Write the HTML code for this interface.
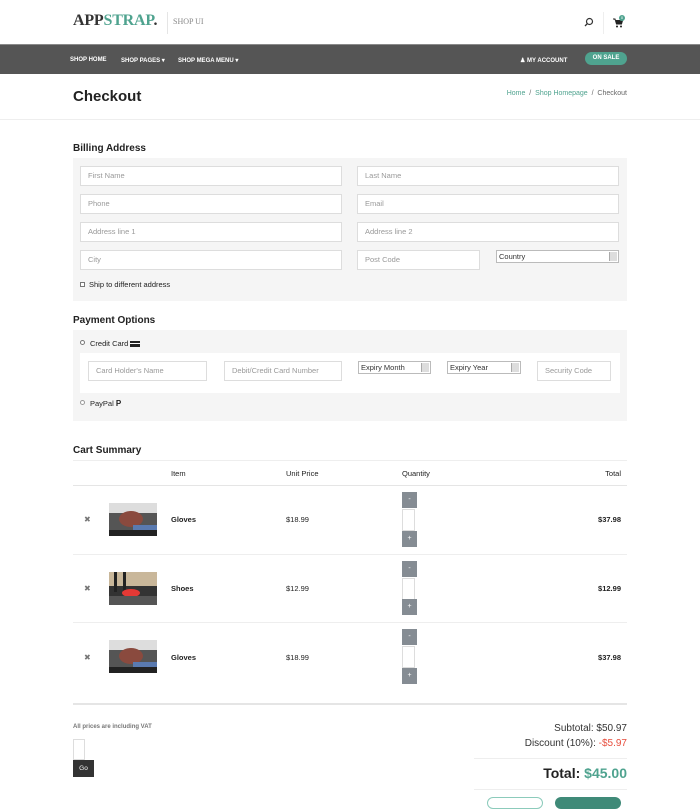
<!DOCTYPE html>
<html><head><meta charset="utf-8"><style>
*{margin:0;padding:0;box-sizing:border-box}
body{width:700px;height:800px;overflow:hidden;background:#fff;font-family:"Liberation Sans",sans-serif;color:#222;position:relative}
.a{position:absolute;white-space:nowrap}
.in{position:absolute;background:#fff;border:1px solid #ddd;height:20px;font-size:7.5px;color:#999;padding:0 7px;line-height:18px}
.sel{position:absolute;background:#fff;border:1px solid #bbb;height:13px;font-size:7.5px;color:#333;padding:0 2px;line-height:11px}
.sel:after{content:"";position:absolute;right:1px;top:1px;width:7px;height:9px;background:#ddd;border-left:1px solid #aaa}
.h{font-size:10px;font-weight:bold;color:#222}
.nav{font-size:6px;font-weight:bold;color:#fff;top:57px}
.t{font-size:7.5px}
.qb{position:absolute;width:15px;height:16px;background:#858c93;color:#fff;font-size:7px;text-align:center;line-height:16px}
.qi{position:absolute;width:13px;height:22px;border:1px solid #ddd;background:#fff}
.line{position:absolute;height:1px;background:#eee}
</style></head><body>
<div class="a" style="left:73px;top:12px;font-family:'Liberation Serif',serif;font-weight:bold;font-size:16px;color:#333;letter-spacing:-0.2px">APP<span style="color:#4fa38f">STRAP</span>.</div>
<div class="a" style="left:167px;top:12px;width:1px;height:22px;background:#e5e5e5"></div>
<div class="a" style="left:173px;top:17px;font-family:'Liberation Serif',serif;font-size:8px;color:#888">SHOP UI</div>
<svg class="a" style="left:584px;top:17px" width="10" height="10" viewBox="0 0 10 10"><circle cx="5.5" cy="4.5" r="3" fill="none" stroke="#333" stroke-width="1.2"/><line x1="3.4" y1="6.6" x2="1" y2="9" stroke="#333" stroke-width="1.3"/></svg>
<div class="a" style="left:603px;top:12px;width:1px;height:22px;background:#eee"></div>
<svg class="a" style="left:613px;top:18px" width="10" height="10" viewBox="0 0 10 10"><path d="M0 1h2l1.5 5h5l1-3.5H3" fill="#222" stroke="#222" stroke-width="1"/><circle cx="4" cy="8.5" r="1" fill="#222"/><circle cx="8" cy="8.5" r="1" fill="#222"/></svg>
<div class="a" style="left:619px;top:15px;width:6px;height:6px;border-radius:3px;background:#4fa38f;color:#fff;font-size:4px;text-align:center;line-height:6px">0</div>
<div class="a" style="left:0;top:44px;width:700px;height:30px;background:#555;border-top:1px solid #8a8a8a"></div>
<div class="a nav" style="left:70px">SHOP HOME</div>
<div class="a nav" style="left:121px">SHOP PAGES ▾</div>
<div class="a nav" style="left:178px">SHOP MEGA MENU ▾</div>
<div class="a nav" style="left:520px">&#9823; MY ACCOUNT</div>
<div class="a" style="left:585px;top:52px;width:42px;height:13px;border-radius:7px;background:#4fa38f;color:#fff;font-size:6px;font-weight:bold;text-align:center;line-height:13px">ON SALE</div>
<div class="a" style="left:73px;top:88px;font-size:15px;font-weight:bold;color:#222">Checkout</div>
<div class="a" style="right:73px;top:90px;font-size:7px;color:#666"><span style="color:#4fa38f">Home</span> &nbsp;/&nbsp; <span style="color:#4fa38f">Shop Homepage</span> &nbsp;/&nbsp; Checkout</div>
<div class="a" style="left:0;top:119px;width:700px;height:1px;background:#eee"></div>

<div class="a h" style="left:73px;top:143px">Billing Address</div>
<div class="a" style="left:73px;top:158px;width:554px;height:143px;background:#f5f5f5"></div>
<div class="in" style="left:80px;top:166px;width:262px">First Name</div>
<div class="in" style="left:357px;top:166px;width:262px">Last Name</div>
<div class="in" style="left:80px;top:194px;width:262px">Phone</div>
<div class="in" style="left:357px;top:194px;width:262px">Email</div>
<div class="in" style="left:80px;top:222px;width:262px">Address line 1</div>
<div class="in" style="left:357px;top:222px;width:262px">Address line 2</div>
<div class="in" style="left:80px;top:250px;width:262px">City</div>
<div class="in" style="left:357px;top:250px;width:123px">Post Code</div>
<div class="sel" style="left:496px;top:250px;width:123px">Country</div>
<div class="a" style="left:80px;top:282px;width:5px;height:5px;border:1px solid #777;background:#fff"></div>
<div class="a t" style="left:89px;top:280px;color:#222">Ship to different address</div>

<div class="a h" style="left:73px;top:315px">Payment Options</div>
<div class="a" style="left:73px;top:330px;width:554px;height:91px;background:#f5f5f5"></div>
<div class="a" style="left:80px;top:340px;width:5px;height:5px;border-radius:3px;border:1px solid #777;background:#fff"></div>
<div class="a t" style="left:90px;top:339px">Credit Card <span style="display:inline-block;width:10px;height:6px;background:#222;border-top:2px solid #222;vertical-align:-1px;box-shadow:inset 0 1px 0 #fff"></span></div>
<div class="a" style="left:80px;top:353px;width:540px;height:40px;background:#fff"></div>
<div class="in" style="left:88px;top:361px;width:119px">Card Holder's Name</div>
<div class="in" style="left:224px;top:361px;width:118px">Debit/Credit Card Number</div>
<div class="sel" style="left:358px;top:361px;width:73px">Expiry Month</div>
<div class="sel" style="left:447px;top:361px;width:74px">Expiry Year</div>
<div class="in" style="left:537px;top:361px;width:74px">Security Code</div>
<div class="a" style="left:80px;top:400px;width:5px;height:5px;border-radius:3px;border:1px solid #999;background:#fff"></div>
<div class="a t" style="left:90px;top:399px">PayPal <b style="font-size:8px">P</b></div>

<div class="a h" style="left:73px;top:445px">Cart Summary</div>
<div class="line" style="left:73px;top:460px;width:554px"></div>
<div class="a t" style="left:171px;top:469px">Item</div>
<div class="a t" style="left:286px;top:469px">Unit Price</div>
<div class="a t" style="left:402px;top:469px">Quantity</div>
<div class="a t" style="right:79px;top:469px">Total</div>
<div class="line" style="left:73px;top:485px;width:554px;background:#e5e5e5"></div>

<div class="a" style="left:84px;top:515px;font-size:8px;color:#777">✖</div>
<svg class="a" style="left:109px;top:503px" width="48" height="33"><rect width="48" height="33" fill="#555"/><rect x="0" y="0" width="48" height="10" fill="#ddd"/><ellipse cx="22" cy="16" rx="12" ry="8" fill="#8a4a3e"/><rect x="24" y="22" width="24" height="11" fill="#5a7ab0"/><rect x="0" y="27" width="48" height="6" fill="#222"/></svg>
<div class="a t" style="left:171px;top:515px;font-weight:bold">Gloves</div>
<div class="a t" style="left:286px;top:515px">$18.99</div>
<div class="qb" style="left:402px;top:492px">-</div><div class="qi" style="left:402px;top:509px"></div><div class="qb" style="left:402px;top:531px">+</div>
<div class="a t" style="right:79px;top:515px;font-weight:bold">$37.98</div>
<div class="line" style="left:73px;top:554px;width:554px"></div>

<div class="a" style="left:84px;top:584px;font-size:8px;color:#777">✖</div>
<svg class="a" style="left:109px;top:572px" width="48" height="33"><rect width="48" height="33" fill="#333"/><rect x="0" y="0" width="48" height="14" fill="#c9b79a"/><rect x="5" y="0" width="3" height="20" fill="#222"/><rect x="14" y="0" width="3" height="20" fill="#222"/><ellipse cx="22" cy="21" rx="9" ry="4" fill="#e53935"/><rect x="0" y="24" width="48" height="9" fill="#555"/></svg>
<div class="a t" style="left:171px;top:584px;font-weight:bold">Shoes</div>
<div class="a t" style="left:286px;top:584px">$12.99</div>
<div class="qb" style="left:402px;top:561px">-</div><div class="qi" style="left:402px;top:578px"></div><div class="qb" style="left:402px;top:599px">+</div>
<div class="a t" style="right:79px;top:584px;font-weight:bold">$12.99</div>
<div class="line" style="left:73px;top:622px;width:554px"></div>

<div class="a" style="left:84px;top:653px;font-size:8px;color:#777">✖</div>
<svg class="a" style="left:109px;top:640px" width="48" height="33"><rect width="48" height="33" fill="#555"/><rect x="0" y="0" width="48" height="10" fill="#ddd"/><ellipse cx="22" cy="16" rx="12" ry="8" fill="#8a4a3e"/><rect x="24" y="22" width="24" height="11" fill="#5a7ab0"/><rect x="0" y="27" width="48" height="6" fill="#222"/></svg>
<div class="a t" style="left:171px;top:653px;font-weight:bold">Gloves</div>
<div class="a t" style="left:286px;top:653px">$18.99</div>
<div class="qb" style="left:402px;top:629px">-</div><div class="qi" style="left:402px;top:646px"></div><div class="qb" style="left:402px;top:668px">+</div>
<div class="a t" style="right:79px;top:653px;font-weight:bold">$37.98</div>
<div class="a" style="left:73px;top:703px;width:554px;height:2px;background:#e5e5e5"></div>

<div class="a" style="left:73px;top:724px;font-size:6px;font-weight:bold;color:#777">All prices are including VAT</div>
<div class="a" style="left:73px;top:739px;width:12px;height:21px;border:1px solid #ddd;background:#fff"></div>
<div class="a" style="left:73px;top:760px;width:21px;height:17px;background:#333;color:#fff;font-size:6.5px;text-align:center;line-height:17px">Go</div>
<div class="a" style="right:73px;top:723px;font-size:10px;color:#333">Subtotal: $50.97</div>
<div class="a" style="right:73px;top:738px;font-size:10px;color:#333">Discount (10%): <span style="color:#e74c3c">-$5.97</span></div>
<div class="line" style="left:474px;top:758px;width:153px"></div>
<div class="a" style="right:73px;top:765px;font-size:14px;font-weight:bold;color:#222">Total: <span style="color:#4fa38f">$45.00</span></div>
<div class="line" style="left:474px;top:789px;width:153px"></div>
<div class="a" style="left:487px;top:797px;width:56px;height:12px;border:1px solid #8ccbbb;border-radius:6px;background:#fff"></div>
<div class="a" style="left:555px;top:797px;width:66px;height:12px;border-radius:6px;background:#3f8a78"></div>
</body></html>
